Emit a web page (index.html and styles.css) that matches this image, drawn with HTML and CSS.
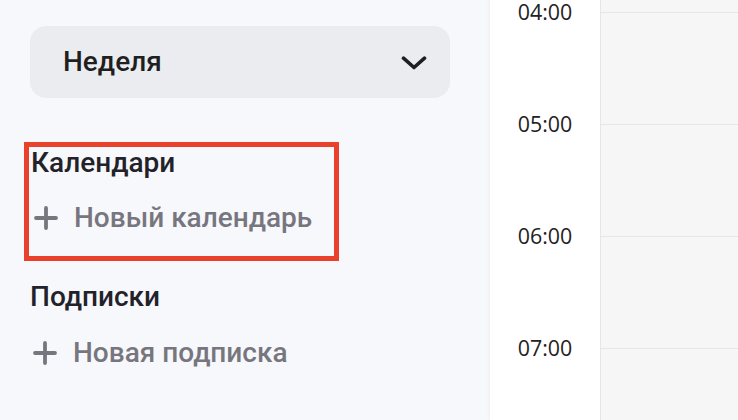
FILE: index.html
```html
<!DOCTYPE html>
<html lang="ru">
<head>
<meta charset="utf-8">
<title>Календарь</title>
<link rel="stylesheet" href="styles.css">
</head>
<body>
<div class="app">
  <aside class="sidebar">
    <div class="select">
      <span class="select-label">Неделя</span>
      <svg class="chevron" width="26" height="14" viewBox="0 0 26 14"><path d="M2.5 2.2 L13 11.5 L23.5 2.2" fill="none" stroke="#1f1f1f" stroke-width="3.6" stroke-linecap="round" stroke-linejoin="round"/></svg>
    </div>
    <section class="group group-highlight">
      <h2 class="group-title">Календари</h2>
      <div class="add-item">
        <svg class="plus" width="24" height="24" viewBox="0 0 24 24"><path d="M12 2 V22 M2 12 H22" fill="none" stroke="#77767e" stroke-width="3.8" stroke-linecap="round"/></svg>
        <span>Новый календарь</span>
      </div>
    </section>
    <section class="group">
      <h2 class="group-title">Подписки</h2>
      <div class="add-item">
        <svg class="plus" width="24" height="24" viewBox="0 0 24 24"><path d="M12 2 V22 M2 12 H22" fill="none" stroke="#77767e" stroke-width="3.8" stroke-linecap="round"/></svg>
        <span>Новая подписка</span>
      </div>
    </section>
  </aside>
  <main class="schedule">
    <div class="times">
      <div class="time">04:00</div>
      <div class="time">05:00</div>
      <div class="time">06:00</div>
      <div class="time">07:00</div>
    </div>
    <div class="grid">
      <div class="hour"></div>
      <div class="hour"></div>
      <div class="hour"></div>
      <div class="hour"></div>
    </div>
  </main>
</div>
</body>
</html>
```

FILE: styles.css
```css
html, body {
  margin: 0;
  padding: 0;
  height: 100%;
  overflow: hidden;
}

body {
  font-family: "Roboto", "Noto Sans", sans-serif;
  background: #f7f8fc;
}

.app {
  display: flex;
  height: 420px;
  overflow: hidden;
}

.sidebar {
  width: 490px;
  flex: none;
  box-sizing: border-box;
  padding: 26px 40px 0 30px;
  background: #f7f8fc;
}

.select {
  height: 72px;
  box-sizing: border-box;
  border-radius: 16px;
  background: #ebecf0;
  display: flex;
  align-items: center;
  justify-content: space-between;
  padding: 0 23px 0 33px;
}

.select-label {
  font-size: 28px;
  font-weight: 500;
  color: #1f1f1f;
  line-height: 32px;
}

.chevron {
  display: block;
  margin-top: 2px;
}

.group {
  margin-top: 20px;
}

.group-highlight {
  width: 315px;
  box-sizing: border-box;
  margin: 44px 0 0 -6px;
  border: 5px solid #e9412c;
  padding: 0 0 22px 2px;
}

.group-title {
  margin: 0;
  font-size: 28px;
  line-height: 32px;
  font-weight: 500;
  color: #23222a;
}

.add-item {
  margin-top: 24px;
  display: flex;
  align-items: center;
  font-size: 28px;
  line-height: 32px;
  font-weight: 500;
  color: #77767e;
}

.group .add-item .plus {
  display: block;
  margin: 0 16px 0 3px;
}

.group-highlight .add-item {
  margin-top: 23px;
}

.schedule {
  flex: 1;
  display: flex;
  background: #ffffff;
  box-shadow: 0 0 4px rgba(0, 0, 0, 0.07);
}

.times {
  width: 110px;
  flex: none;
  background: #ffffff;
}

.time {
  height: 112px;
  line-height: 24px;
  text-align: center;
  font-family: "Open Sans", "Noto Sans", sans-serif;
  font-size: 21.4px;
  font-weight: 400;
  color: #222222;
}

.grid {
  flex: 1;
  padding-top: 12px;
  background: #f6f6f6;
  border-left: 1px solid #e6e6e6;
}

.hour {
  height: 112px;
  box-sizing: border-box;
  border-top: 1px solid #e6e6e6;
}
```
